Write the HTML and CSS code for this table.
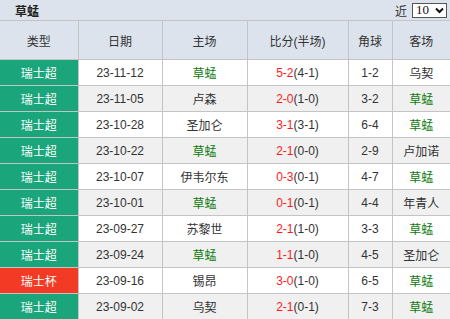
FILE: index.html
```html
<!DOCTYPE html>
<html lang="zh">
<head>
<meta charset="utf-8">
<link rel="stylesheet" href="styles.css">
</head>
<body>
<div class="bar">
  <span class="bar-title">草蜢</span>
  <div class="pick">
    <span class="pick-label">近</span>
    <span class="pick-box"><span class="pick-val">10</span><svg class="chev" width="9" height="7" viewBox="0 0 9 7"><path d="M1 1.5 L4.5 5 L8 1.5" fill="none" stroke="#111" stroke-width="2"/></svg></span>
  </div>
</div>
<table class="tbl">
  <colgroup><col class="c1"><col class="c2"><col class="c3"><col class="c4"><col class="c5"><col class="c6"></colgroup>
  <thead>
    <tr><th>类型</th><th>日期</th><th>主场</th><th>比分(半场)</th><th>角球</th><th>客场</th></tr>
  </thead>
  <tbody>
    <tr><td class="lg sup">瑞士超</td><td>23-11-12</td><td class="tm">草蜢</td><td><span class="sc">5-2</span>(4-1)</td><td>1-2</td><td>乌契</td></tr>
    <tr><td class="lg sup">瑞士超</td><td>23-11-05</td><td>卢森</td><td><span class="sc">2-0</span>(1-0)</td><td>3-2</td><td class="tm">草蜢</td></tr>
    <tr><td class="lg sup">瑞士超</td><td>23-10-28</td><td>圣加仑</td><td><span class="sc">3-1</span>(3-1)</td><td>6-4</td><td class="tm">草蜢</td></tr>
    <tr><td class="lg sup">瑞士超</td><td>23-10-22</td><td class="tm">草蜢</td><td><span class="sc">2-1</span>(0-0)</td><td>2-9</td><td>卢加诺</td></tr>
    <tr><td class="lg sup">瑞士超</td><td>23-10-07</td><td>伊韦尔东</td><td><span class="sc">0-3</span>(0-1)</td><td>4-7</td><td class="tm">草蜢</td></tr>
    <tr><td class="lg sup">瑞士超</td><td>23-10-01</td><td class="tm">草蜢</td><td><span class="sc">0-1</span>(0-1)</td><td>4-4</td><td>年青人</td></tr>
    <tr><td class="lg sup">瑞士超</td><td>23-09-27</td><td>苏黎世</td><td><span class="sc">2-1</span>(1-0)</td><td>3-3</td><td class="tm">草蜢</td></tr>
    <tr><td class="lg sup">瑞士超</td><td>23-09-24</td><td class="tm">草蜢</td><td><span class="sc">1-1</span>(1-0)</td><td>4-5</td><td>圣加仑</td></tr>
    <tr><td class="lg cup">瑞士杯</td><td>23-09-16</td><td>锡昂</td><td><span class="sc">3-0</span>(1-0)</td><td>6-5</td><td class="tm">草蜢</td></tr>
    <tr><td class="lg sup">瑞士超</td><td>23-09-02</td><td>乌契</td><td><span class="sc">2-1</span>(0-1)</td><td>7-3</td><td class="tm">草蜢</td></tr>
  </tbody>
</table>
</body>
</html>
```

FILE: styles.css
```css
html, body {
  margin: 0;
  padding: 0;
  background: #ffffff;
}
body {
  width: 450px;
  font-family: "Liberation Sans", "Noto Sans CJK SC", sans-serif;
  font-size: 12px;
  color: #333333;
}
.bar {
  height: 20px;
  background: #dce3ec;
  display: flex;
  align-items: center;
  justify-content: space-between;
  padding: 0 3px 0 15px;
  box-sizing: border-box;
}
.bar-title {
  font-weight: bold;
  color: #222222;
  font-size: 12px;
}
.pick {
  display: flex;
  align-items: center;
  gap: 5px;
}
.pick-label {
  color: #333333;
}
.pick-box {
  display: flex;
  align-items: center;
  justify-content: space-between;
  width: 35px;
  height: 15px;
  box-sizing: border-box;
  border: 1px solid #555555;
  background: #ffffff;
  padding: 0 2px 0 3px;
  color: #111111;
  font-family: "Liberation Serif", serif;
  font-size: 13px;
}
.chev {
  display: block;
}
.tbl {
  width: 450px;
  border-collapse: collapse;
  table-layout: fixed;
}
.c1 { width: 78px; }
.c2 { width: 84px; }
.c3 { width: 85px; }
.c4 { width: 101px; }
.c5 { width: 44px; }
.c6 { width: 58px; }
.tbl th, .tbl td {
  border-right: 1px solid #c4c4c4;
  border-bottom: 1px solid #c4c4c4;
  text-align: center;
  padding: 0;
  white-space: nowrap;
  overflow: hidden;
}
.tbl th:last-child, .tbl td:last-child {
  border-right: none;
}
.tbl thead th {
  height: 38px;
  background: #dce3ec;
  font-weight: normal;
  color: #333333;
  border-top: 1px solid #c4c4c4;
}
.tbl tbody td {
  height: 25px;
  background: #ffffff;
}
.tbl tbody tr:nth-child(even) td {
  background: #f0f0f0;
}
.tbl tbody tr td.lg {
  color: #ffffff;
}
.tbl tbody tr td.sup {
  background: #1ba57a;
}
.tbl tbody tr td.cup {
  background: #f33a24;
}
.tm {
  color: #0b7a0b;
}
.sc {
  color: #ff1a1a;
}
```
